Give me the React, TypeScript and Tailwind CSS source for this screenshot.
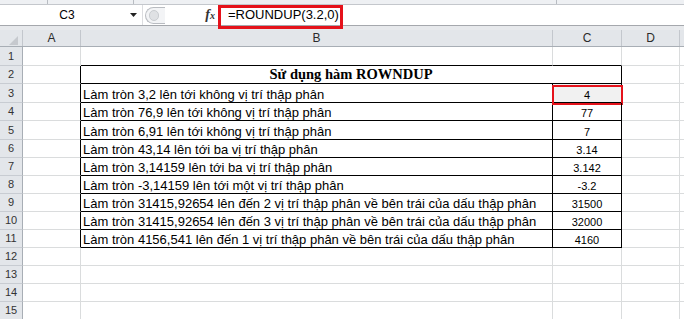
import React from 'react';

type SheetRow = { n: number; h: string; text?: string; value?: string };

const rows: SheetRow[] = [
  { n: 1, h: 'h-[19px]' },
  { n: 2, h: 'h-[18px]' },
  { n: 3, h: 'h-[19px]', text: 'Làm tròn 3,2 lên tới không vị trí thập phân', value: '4' },
  { n: 4, h: 'h-[18px]', text: 'Làm tròn 76,9 lên tới không vị trí thập phân', value: '77' },
  { n: 5, h: 'h-[19px]', text: 'Làm tròn 6,91 lên tới không vị trí thập phân', value: '7' },
  { n: 6, h: 'h-[18px]', text: 'Làm tròn 43,14 lên tới ba vị trí thập phân', value: '3.14' },
  { n: 7, h: 'h-[18px]', text: 'Làm tròn 3,14159 lên tới ba vị trí thập phân', value: '3.142' },
  { n: 8, h: 'h-[18px]', text: 'Làm tròn -3,14159 lên tới một vị trí thập phân', value: '-3.2' },
  { n: 9, h: 'h-[18px]', text: 'Làm tròn 31415,92654 lên đến 2 vị trí thập phân về bên trái của dấu thập phân', value: '31500' },
  { n: 10, h: 'h-[18px]', text: 'Làm tròn 31415,92654 lên đến 3 vị trí thập phân về bên trái của dấu thập phân', value: '32000' },
  { n: 11, h: 'h-[18px]', text: 'Làm tròn 4156,541 lên đến 1 vị trí thập phân về bên trái của dấu thập phân', value: '4160' },
  { n: 12, h: 'h-[18px]' },
  { n: 13, h: 'h-[18px]' },
  { n: 14, h: 'h-[18px]' },
  { n: 15, h: 'h-[18px]' },
];

const FormulaBar: React.FC = () => (
  <div className="relative">
    {/* ribbon edge */}
    <div className="h-[5px] bg-[#eef0f3] border-b border-[#c4c7cc] flex">
      <div className="w-[48px] border-r border-[#b8bcc2]" />
      <div className="w-[86px] border-r border-[#b8bcc2]" />
      <div className="w-[423px] border-r border-[#b8bcc2]" />
    </div>
    <div className="h-[21px] flex bg-white border-b border-[#a5a8ad]">
      {/* name box */}
      <div className="w-[143px] flex items-center border-r border-[#dcdde0]">
        <div className="flex-1 text-center text-[12px] text-black pl-[4px]">C3</div>
        <svg width="7" height="4" viewBox="0 0 7 4" className="mr-[5px]">
          <polygon points="0,0 7,0 3.5,4" fill="#222" />
        </svg>
      </div>
      {/* splitter + fx */}
      <div className="w-[75px] flex items-center">
        <div className="ml-[2px] w-[20px] h-[17px] rounded-l-full border border-r-0 border-[#b9bcc1] bg-[#f3f4f6] flex items-center pl-[3px]">
          <div className="w-[10px] h-[11px] rounded-full bg-[#dfe1e4] border border-[#c9ccd0]" />
        </div>
        <div className="ml-auto mr-[3px] font-['Liberation_Serif'] italic font-bold text-[14px] text-[#333] leading-none">
          f<span className="text-[10px]">x</span>
        </div>
      </div>
      <div className="flex-1 flex items-center pl-[10px] text-[13px] text-black">=ROUNDUP(3.2,0)</div>
    </div>
    <div className="h-[4px] bg-[#e7e9ec]" />
    {/* red highlight on the formula */}
    <div className="absolute left-[218px] top-[5px] w-[125px] h-[24px] border-[3px] border-[#e5121b]" />
  </div>
);

const ColumnHeaders: React.FC = () => {
  const cell = 'h-full flex items-center justify-center border-r border-[#c3c7cd] text-[12px] text-[#2b2b2b]';
  return (
    <div className="h-[17px] flex bg-[#e3e6ea] border-b border-[#a8aeb5]">
      <div className="w-[23px] h-full border-r border-[#c3c7cd] relative">
        <svg width="9" height="9" viewBox="0 0 9 9" className="absolute right-[4px] bottom-[1px]">
          <polygon points="9,0 9,9 0,9" fill="#c6c9ce" />
        </svg>
      </div>
      <div className={`w-[58px] ${cell}`}>A</div>
      <div className={`w-[472px] ${cell}`}>B</div>
      <div className={`w-[69px] ${cell}`}>C</div>
      <div className={`w-[58px] ${cell}`}>D</div>
      <div className="flex-1" />
    </div>
  );
};

const SheetRowView: React.FC<{ row: SheetRow }> = ({ row }) => {
  const inTable = row.n >= 2 && row.n <= 11;
  const gridB = 'border-b border-r border-[#dadcdd]';
  const aCell = inTable ? 'border-b border-[#dadcdd] border-r border-r-black' : gridB;
  const topEdge = row.n === 1 ? 'border-b-black' : '';

  return (
    <div className={`${row.h} flex`}>
      <div className="w-[23px] h-full bg-[#e3e6ea] border-r border-[#a8aeb5] border-b border-b-[#c8ccd2] flex items-center justify-center text-[11px] text-[#333]">
        {row.n}
      </div>
      <div className={`w-[58px] h-full ${aCell}`} />
      {row.n === 2 ? (
        <div className="w-[541px] h-full border-b border-r border-black flex items-end justify-center font-['Liberation_Serif'] font-bold text-[14.5px] leading-[17px] text-black">
          Sử dụng hàm ROWNDUP
        </div>
      ) : inTable ? (
        <>
          <div className="w-[472px] h-full border-b border-r border-black flex items-end pl-[2px] text-[13px] leading-[15px] text-black whitespace-nowrap">
            {row.text}
          </div>
          <div className={`w-[69px] h-full border-b border-r border-black flex items-end justify-center text-[11px] leading-[13px] text-black relative ${row.n === 3 ? 'bg-[#f1f1f1]' : ''}`}>
            {row.value}
            {row.n === 3 && (
              <div className="absolute left-[-1px] top-[1px] w-[71px] h-[20px] border-2 border-[#e5121b]" />
            )}
          </div>
        </>
      ) : (
        <>
          <div className={`w-[472px] h-full border-b border-r border-[#dadcdd] ${topEdge}`} />
          <div className={`w-[69px] h-full border-b border-r border-[#dadcdd] ${topEdge}`} />
        </>
      )}
      <div className="w-[58px] h-full border-b border-r border-[#dadcdd]" />
      <div className="flex-1 h-full border-b border-[#dadcdd]" />
    </div>
  );
};

export default function App() {
  return (
    <div className="w-[684px] h-[319px] overflow-hidden bg-white font-['Liberation_Sans',Arial,sans-serif]">
      <FormulaBar />
      <ColumnHeaders />
      {rows.map((r) => (
        <SheetRowView key={r.n} row={r} />
      ))}
    </div>
  );
}
